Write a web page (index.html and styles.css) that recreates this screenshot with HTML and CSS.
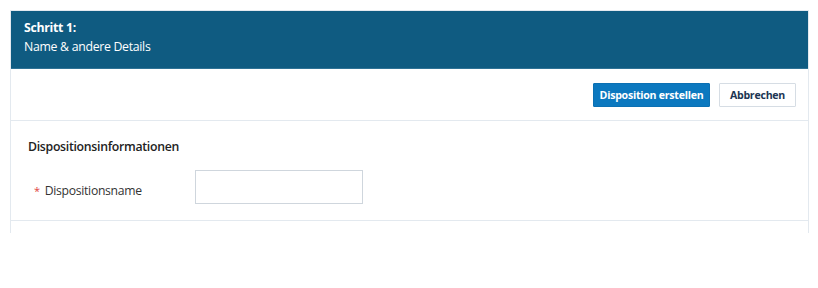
FILE: index.html
```html
<!DOCTYPE html>
<html lang="de">
<head>
<meta charset="utf-8">
<link rel="stylesheet" href="styles.css">
</head>
<body>
<div class="panel">
  <div class="header">
    <div class="step">Schritt 1:</div>
    <div class="subtitle">Name &amp; andere Details</div>
  </div>
  <div class="actions">
    <button class="btn btn-primary">Disposition erstellen</button>
    <button class="btn btn-default">Abbrechen</button>
  </div>
  <div class="section">
    <div class="section-title">Dispositionsinformationen</div>
    <div class="field">
      <label class="label"><span class="req">*</span>Dispositionsname</label>
      <input class="input" type="text">
    </div>
  </div>
  <div class="tail"></div>
</div>
</body>
</html>
```

FILE: styles.css
```css
html, body {
  margin: 0;
  padding: 0;
  background: #ffffff;
}
body {
  padding: 10px 0 0 10px;
  font-family: "Open Sans", "Noto Sans", sans-serif;
  color: #222;
}
.panel {
  width: 799px;
  box-sizing: border-box;
  border: 1px solid #e3e9ef;
  border-bottom: none;
}
.header {
  background: #0f5b81;
  color: #ffffff;
  padding: 7px 13px 12px;
  font-size: 12.3px;
  letter-spacing: -0.3px;
  line-height: 19px;
  border-bottom: 1px solid #2f7295;
}
.step {
  font-weight: 700;
}
.actions {
  display: flex;
  justify-content: flex-end;
  gap: 9px;
  padding: 14px 12px 13px;
  border-bottom: 1px solid #e3e9ef;
}
.btn {
  height: 24px;
  box-sizing: border-box;
  font-family: "Open Sans", "Noto Sans", sans-serif;
  font-size: 10.6px;
  letter-spacing: -0.25px;
  font-weight: 700;
  padding: 0;
  white-space: nowrap;
  border-radius: 1px;
  cursor: pointer;
}
.btn-primary {
  width: 117px;
  background: #0b78bf;
  border: 1px solid #0b70b3;
  color: #ffffff;
}
.btn-default {
  width: 77px;
  background: #ffffff;
  border: 1px solid #d6dde4;
  color: #1c3653;
}
.section {
  padding: 16px 17px 16px;
  border-bottom: 1px solid #e3e9ef;
}
.section-title {
  font-size: 12.3px;
  letter-spacing: -0.3px;
  font-weight: 600;
  line-height: 19px;
  color: #222;
}
.field {
  display: flex;
  align-items: center;
  margin-top: 14px;
}
.label {
  width: 167px;
  box-sizing: border-box;
  padding-left: 6px;
  font-size: 12.2px;
  letter-spacing: -0.3px;
  color: #333;
  line-height: 19px;
  margin-top: 6px;
}
.req {
  color: #e0433e;
  margin-right: 5px;
  font-size: 11px;
}
.input {
  width: 168px;
  height: 34px;
  box-sizing: border-box;
  border: 1px solid #cfd6dd;
  border-radius: 0;
  margin: 0;
  padding: 0 8px;
  outline: none;
}
.tail {
  height: 12px;
}
```
